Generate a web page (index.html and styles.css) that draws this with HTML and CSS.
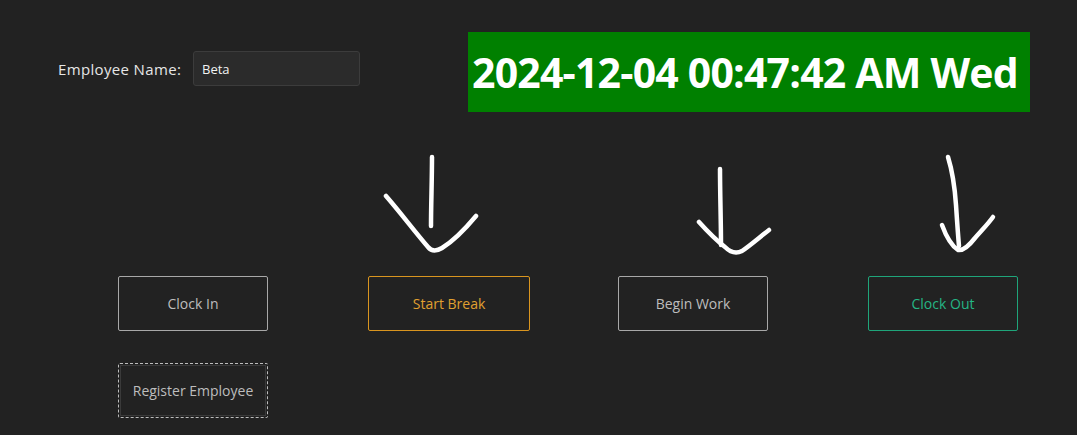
FILE: index.html
```html
<!DOCTYPE html>
<html>
<head>
<meta charset="utf-8">
<link rel="stylesheet" href="styles.css">
</head>
<body>
<div class="app">
  <div class="top">
    <div class="field">
      <label class="label">Employee Name:</label>
      <div class="input">Beta</div>
    </div>
    <div class="clock">2024-12-04 00:47:42 AM Wed</div>
  </div>
  <div class="buttons">
    <button class="btn">Clock In</button>
    <button class="btn btn-break">Start Break</button>
    <button class="btn">Begin Work</button>
    <button class="btn btn-out">Clock Out</button>
    <button class="btn btn-reg">Register Employee</button>
  </div>
  <svg class="arrows" width="1077" height="435" viewBox="0 0 1077 435" fill="none" stroke="#fff" stroke-width="4.5" stroke-linecap="round" stroke-linejoin="round">
    <path d="M432 157 C432 180 431 205 431 226"/>
    <path d="M386 196 C400 212 415 232 428 247 C432 252 437 251 442 248 C455 240 466 228 476 216"/>
    <path d="M720 169 C720 195 721 220 721 245"/>
    <path d="M699 222 C708 232 716 240 725 247 C730 252 736 254 742 251 C752 244 761 236 769 230"/>
    <path d="M948 157 C952 170 955 190 956 205 C957 220 958 235 959 246"/>
    <path d="M942 225 C946 236 952 246 958 250 C963 251 968 247 975 238 C982 230 988 224 993 217"/>
  </svg>
</div>
</body>
</html>
```

FILE: styles.css
```css
* { box-sizing: border-box; }
html, body {
  margin: 0;
  padding: 0;
  background: #222222;
  width: 1077px;
  height: 435px;
  overflow: hidden;
}
.app {
  position: relative;
  width: 1077px;
  height: 435px;
  font-family: "Open Sans", "Noto Sans", sans-serif;
}
.top {
  display: flex;
  align-items: flex-start;
  padding-top: 32px;
}
.field {
  display: flex;
  align-items: center;
  margin-left: 58px;
  margin-top: 19px;
  width: 410px;
}
.label {
  color: #e6e6e6;
  font-size: 15px;
  letter-spacing: 0.35px;
  width: 135px;
}
.input {
  width: 167px;
  height: 35px;
  background: #2b2b2b;
  border: 1px solid #3c3c3c;
  border-radius: 3px;
  color: #f2f2f2;
  font-size: 13px;
  padding-left: 8px;
  display: flex;
  align-items: center;
}
.clock {
  width: 562px;
  height: 80px;
  background: #008000;
  color: #ffffff;
  font-weight: 700;
  font-size: 41px;
  letter-spacing: -0.8px;
  display: flex;
  align-items: center;
  padding-left: 4px;
  padding-bottom: 1px;
  white-space: nowrap;
}
.buttons {
  display: grid;
  grid-template-columns: repeat(4, 250px);
  row-gap: 32px;
  padding-left: 118px;
  margin-top: 164px;
}
.btn {
  width: 150px;
  height: 55px;
  background: transparent;
  border: 1px solid #a8a8a8;
  border-radius: 2px;
  color: #bdbdbd;
  font-family: "Open Sans", "Noto Sans", sans-serif;
  font-size: 14px;
  padding: 0;
}
.btn-break {
  width: 162px;
  border-color: #d9951f;
  color: #e0a030;
}
.btn-out {
  border-color: #1fa57a;
  color: #25b585;
}
.btn-reg {
  border: 1px dashed #bdbdbd;
  outline: 1px solid #3a3a3a;
  outline-offset: -3px;
}
.arrows {
  position: absolute;
  left: 0;
  top: 0;
  pointer-events: none;
}
```
